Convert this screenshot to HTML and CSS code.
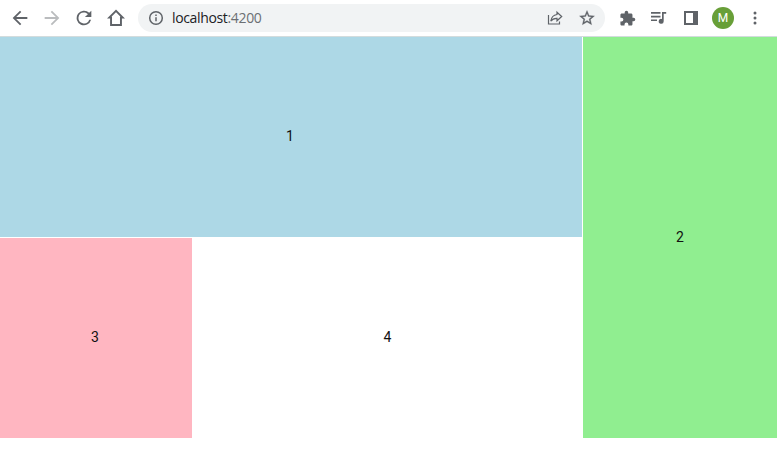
FILE: index.html
```html
<!DOCTYPE html>
<html lang="en">
<head>
<meta charset="utf-8">
<title>localhost:4200</title>
<link rel="stylesheet" href="styles.css">
</head>
<body>
<header class="toolbar">
  <nav class="nav">
    <svg class="icon" viewBox="0 0 24 24"><path d="M20 11H7.83l5.59-5.59L12 4l-8 8 8 8 1.41-1.41L7.83 13H20z"/></svg>
    <svg class="icon disabled" viewBox="0 0 24 24"><path d="M12 4l-1.41 1.41L16.17 11H4v2h12.17l-5.58 5.59L12 20l8-8z"/></svg>
    <svg class="icon" viewBox="0 0 24 24"><path d="M17.65 6.35A8 8 0 1 0 19.73 14h-2.08A6 6 0 1 1 12 6c1.66 0 3.14.69 4.22 1.78L13 11h7V4z"/></svg>
    <svg class="icon home" viewBox="0 0 24 24"><path d="M12 4.2 4.7 11.6H6.6v8h10.8v-8h1.9z"/></svg>
  </nav>
  <div class="address">
    <svg class="info" viewBox="0 0 16 16"><circle cx="8" cy="8" r="6.3"/><path d="M8 7.2v4M8 4.4v1.5"/></svg>
    <span class="url">localhost<span class="port">:4200</span></span>
    <svg class="share" viewBox="0 0 16 16"><path d="M1.5 5v9h11v-2.5M10 2.2l4.7 4.3L10 10.8V8.4C7.1 8.3 5.2 9.2 3.8 11.2 4.3 7.6 6.2 5 10 4.5z"/></svg>
    <svg class="star" viewBox="0 0 24 24"><path d="M22 9.24l-7.19-.62L12 2 9.19 8.63 2 9.24l5.46 4.73L5.82 21 12 17.27 18.18 21l-1.63-7.03zM12 15.4l-3.76 2.27 1-4.28-3.32-2.88 4.38-.38L12 6.1l1.71 4.04 4.38.38-3.32 2.88 1 4.28z"/></svg>
  </div>
  <div class="actions">
    <svg class="puzzle" viewBox="0 0 24 24"><path d="M20.5 11H19V7c0-1.1-.9-2-2-2h-4V3.5a2.5 2.5 0 0 0-5 0V5H4c-1.1 0-1.99.9-1.99 2v3.8H3.5a2.7 2.7 0 0 1 0 5.4H2V20c0 1.1.9 2 2 2h3.8v-1.5a2.7 2.7 0 0 1 5.4 0V22H17c1.1 0 2-.9 2-2v-4h1.5a2.5 2.5 0 0 0 0-5z"/></svg>
    <svg class="media" viewBox="0 0 18 16"><path d="M1 2h9.5v1.7H1zM1 5.7h9.5v1.7H1zM1 9.4h6v1.7H1z"/><path d="M12 2h4.2v1.8h-2.5v7.5a2.5 2.5 0 1 1-1.7-2.35z"/></svg>
    <svg class="panel" viewBox="0 0 14 14"><path fill-rule="evenodd" d="M0 0h14v14H0zM2 2v10h7V2z"/></svg>
    <span class="avatar">M</span>
    <svg class="more" viewBox="0 0 4 14"><circle cx="2" cy="2" r="1.5"/><circle cx="2" cy="7" r="1.5"/><circle cx="2" cy="12" r="1.5"/></svg>
  </div>
</header>
<main class="grid">
  <div class="tile one">1</div>
  <div class="tile two">2</div>
  <div class="tile three">3</div>
  <div class="tile four">4</div>
</main>
</body>
</html>
```
FILE: styles.css
```css
* { box-sizing: border-box; }
body {
  margin: 0;
  background: #fff;
  font-family: Roboto, "Liberation Sans", sans-serif;
  font-size: 14px;
  color: #111;
}
svg { display: block; flex: none; fill: #5f6368; }
.toolbar {
  display: flex;
  align-items: center;
  height: 37px;
  border-bottom: 1px solid #d3dcdd;
}
.nav { display: flex; gap: 10px; padding-left: 9px; width: 138px; }
.icon { width: 22px; height: 22px; }
.icon.disabled { fill: #babcbe; }
.icon.home { fill: none; stroke: #5f6368; stroke-width: 2.1; }
.address {
  display: flex;
  align-items: center;
  width: 467px;
  height: 28px;
  padding: 0 10px;
  border-radius: 14px;
  background: #f1f3f4;
}
.info { width: 16px; height: 16px; fill: none; stroke: #5f6368; stroke-width: 1.5; }
.url {
  flex: 1;
  margin-left: 8px;
  color: #202124;
  font-family: "Open Sans", "Noto Sans", sans-serif;
  font-size: 14px;
  letter-spacing: -0.35px;
  line-height: 20px;
}
.port { color: #6b6f73; }
.share { width: 16px; height: 16px; fill: none; stroke: #5f6368; stroke-width: 1.2; margin-right: 15px; }
.star { width: 18px; height: 18px; margin-right: -1px; stroke: #5f6368; stroke-width: 0.4; }
.actions { display: flex; align-items: center; flex: 1; padding-left: 14px; }
.puzzle { width: 17px; height: 17px; }
.media { width: 18px; height: 16px; margin-left: 14px; }
.panel { width: 14px; height: 14px; margin-left: 16px; }
.avatar {
  width: 22px;
  height: 22px;
  margin: 0 19px 0 14px;
  border-radius: 50%;
  background: #689f38;
  color: #fff;
  font-size: 12px;
  line-height: 22px;
  text-align: center;
}
.more { width: 4px; height: 14px; }
.grid {
  display: grid;
  grid-template-columns: 192px 389px 194px;
  grid-template-rows: 200px 200px;
  gap: 1px;
}
.tile { display: flex; align-items: center; justify-content: center; padding: 0 2px 2px 0; }
.one { grid-column: 1 / 3; background: lightblue; }
.two { grid-column: 3; grid-row: 1 / 3; background: lightgreen; padding: 0 0 1px; }
.three { background: lightpink; }
.four { background: #fff; padding-right: 0; }
```
